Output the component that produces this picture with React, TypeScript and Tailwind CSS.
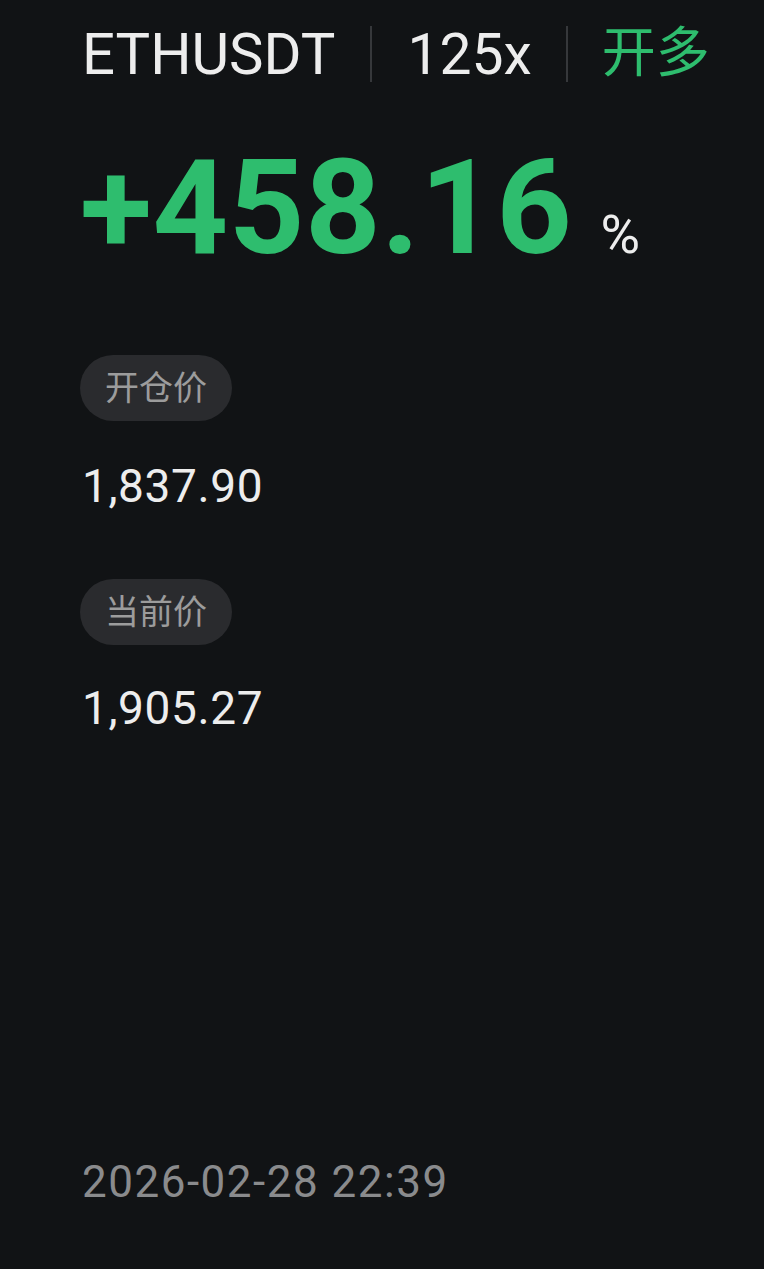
export default function App() {
  return (
    <div
      className="min-h-screen w-full bg-[#111315] text-[#ededed] flex flex-col pl-[82px] pr-6"
      style={{ fontFamily: 'Roboto, "Noto Sans CJK SC", sans-serif' }}
    >
      {/* Header */}
      <div className="flex items-center h-[62px] mt-[23px]">
        <span className="text-[58px] leading-none">ETHUSDT</span>
        <div className="w-[2px] h-[56px] bg-[#36383b] mx-[35px]" />
        <span className="text-[57px] leading-none">125x</span>
        <div className="w-[2px] h-[56px] bg-[#36383b] mx-[34px]" />
        <span className="text-[54px] leading-none text-[#2ebd6e]">开多</span>
      </div>

      {/* PnL */}
      <div className="flex items-baseline mt-[57px]">
        <span className="text-[132px] leading-none font-bold text-[#2ebd6e] -ml-[2px] tracking-[0.5px]">+458.16</span>
        <span className="text-[54px] leading-none ml-[28px]">%</span>
      </div>

      {/* Entry price */}
      <div className="mt-[81px] flex">
        <span className="h-[66px] px-[25px] rounded-full bg-[#2a2b2e] text-[#9c9c9c] text-[34px] flex items-center -ml-[2px]">
          开仓价
        </span>
      </div>
      <div className="mt-[42px] text-[46px] leading-none tracking-[0.6px]">1,837.90</div>

      {/* Current price */}
      <div className="mt-[70px] flex">
        <span className="h-[66px] px-[25px] rounded-full bg-[#2a2b2e] text-[#9c9c9c] text-[34px] flex items-center -ml-[2px]">
          当前价
        </span>
      </div>
      <div className="mt-[40px] text-[46px] leading-none tracking-[0.6px]">1,905.27</div>

      {/* Time */}
      <div className="mt-auto mb-[65px] text-[44px] leading-none text-[#8a8b8d] tracking-[1.5px]">2026-02-28 22:39</div>
    </div>
  );
}
